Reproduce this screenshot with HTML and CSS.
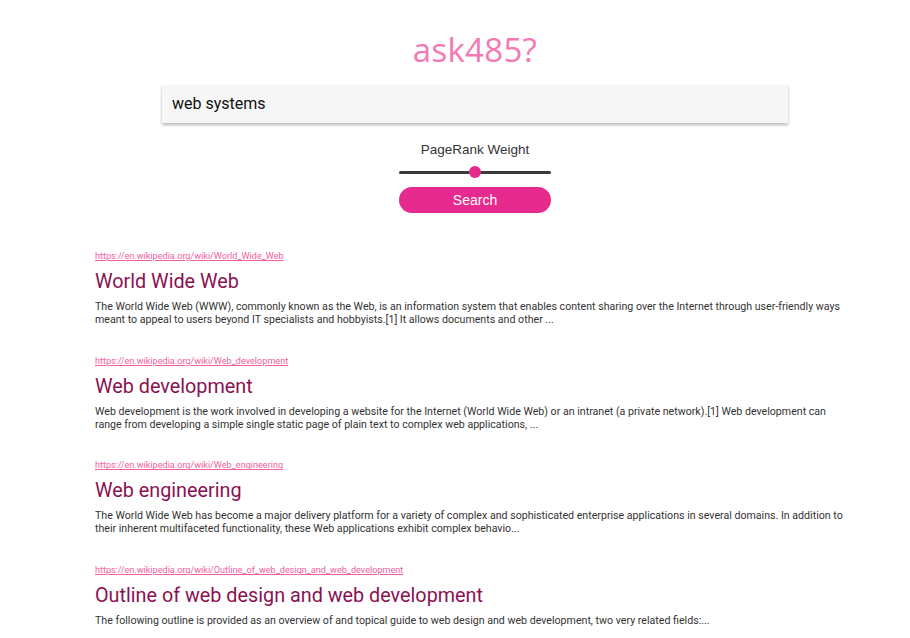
FILE: index.html
```html
<!DOCTYPE html>
<html>
<head>
<meta charset="utf-8">
<link rel="stylesheet" href="styles.css">
</head>
<body>
<header class="top">
  <h1 class="logo">ask485?</h1>
  <div class="searchbar">web systems</div>
  <div class="weight">PageRank Weight</div>
  <div class="slider"><div class="track"></div><div class="thumb"></div></div>
  <button class="btn">Search</button>
</header>
<main class="results">
  <div class="result">
    <a class="url" href="#">https://en.wikipedia.org/wiki/World_Wide_Web</a>
    <h2 class="title">World Wide Web</h2>
    <p class="snippet">The World Wide Web (WWW), commonly known as the Web, is an information system that enables content sharing over the Internet through user-friendly ways meant to appeal to users beyond IT specialists and hobbyists.[1] It allows documents and other ...</p>
  </div>
  <div class="result">
    <a class="url" href="#">https://en.wikipedia.org/wiki/Web_development</a>
    <h2 class="title">Web development</h2>
    <p class="snippet">Web development is the work involved in developing a website for the Internet (World Wide Web) or an intranet (a private network).[1] Web development can range from developing a simple single static page of plain text to complex web applications, ...</p>
  </div>
  <div class="result">
    <a class="url" href="#">https://en.wikipedia.org/wiki/Web_engineering</a>
    <h2 class="title">Web engineering</h2>
    <p class="snippet">The World Wide Web has become a major delivery platform for a variety of complex and sophisticated enterprise applications in several domains. In addition to their inherent multifaceted functionality, these Web applications exhibit complex behavio...</p>
  </div>
  <div class="result">
    <a class="url" href="#">https://en.wikipedia.org/wiki/Outline_of_web_design_and_web_development</a>
    <h2 class="title">Outline of web design and web development</h2>
    <p class="snippet">The following outline is provided as an overview of and topical guide to web design and web development, two very related fields:...</p>
  </div>
</main>
</body>
</html>
```
FILE: styles.css
```css
html, body {
  margin: 0;
  padding: 0;
  background: #ffffff;
  font-family: Roboto, "Liberation Sans", sans-serif;
  overflow: hidden;
}
.top {
  display: flex;
  flex-direction: column;
  align-items: center;
  padding-top: 30px;
  padding-left: 40px;
}
.logo {
  margin: 0;
  font-family: "Open Sans", "Liberation Sans", sans-serif;
  font-weight: 400;
  font-size: 33px;
  line-height: 40px;
  color: #f577b4;
  letter-spacing: 0.3px;
}
.searchbar {
  margin-top: 15px;
  width: 616px;
  height: 38px;
  padding-left: 10px;
  background: #f6f6f6;
  box-shadow: 0 2px 3px rgba(0,0,0,0.28);
  font-size: 16px;
  line-height: 38px;
  color: #111;
}
.weight {
  margin-top: 18px;
  font-family: "Liberation Sans", Arial, sans-serif;
  font-size: 13.5px;
  line-height: 18px;
  color: #333;
}
.slider {
  position: relative;
  margin-top: 7px;
  width: 152px;
  height: 12px;
}
.track {
  position: absolute;
  left: 0;
  right: 0;
  top: 5px;
  height: 3px;
  background: #3a3a3a;
  border-radius: 2px;
}
.thumb {
  position: absolute;
  left: 70px;
  top: 0;
  width: 12px;
  height: 12px;
  border-radius: 50%;
  background: #e6288e;
}
.btn {
  margin-top: 9px;
  width: 152px;
  height: 26px;
  border: none;
  border-radius: 13px;
  background: #e72a8e;
  color: #fff;
  font-family: "Liberation Sans", Arial, sans-serif;
  font-size: 14px;
  padding: 0;
}
.results {
  margin: 37px 0 0 95px;
  width: 758px;
  display: flex;
  flex-direction: column;
  gap: 28.7px;
}
.result {
  display: flex;
  flex-direction: column;
  align-items: flex-start;
}
.url {
  font-size: 9.1px;
  line-height: 12px;
  color: #f0609f;
  text-decoration: underline;
}
.title {
  margin: 7px 0 0 0;
  font-weight: 400;
  font-size: 19.8px;
  line-height: 26px;
  color: #8a1152;
}
.snippet {
  margin: 5px 0 0 0;
  font-size: 10.64px;
  line-height: 13px;
  color: #333;
}
```
